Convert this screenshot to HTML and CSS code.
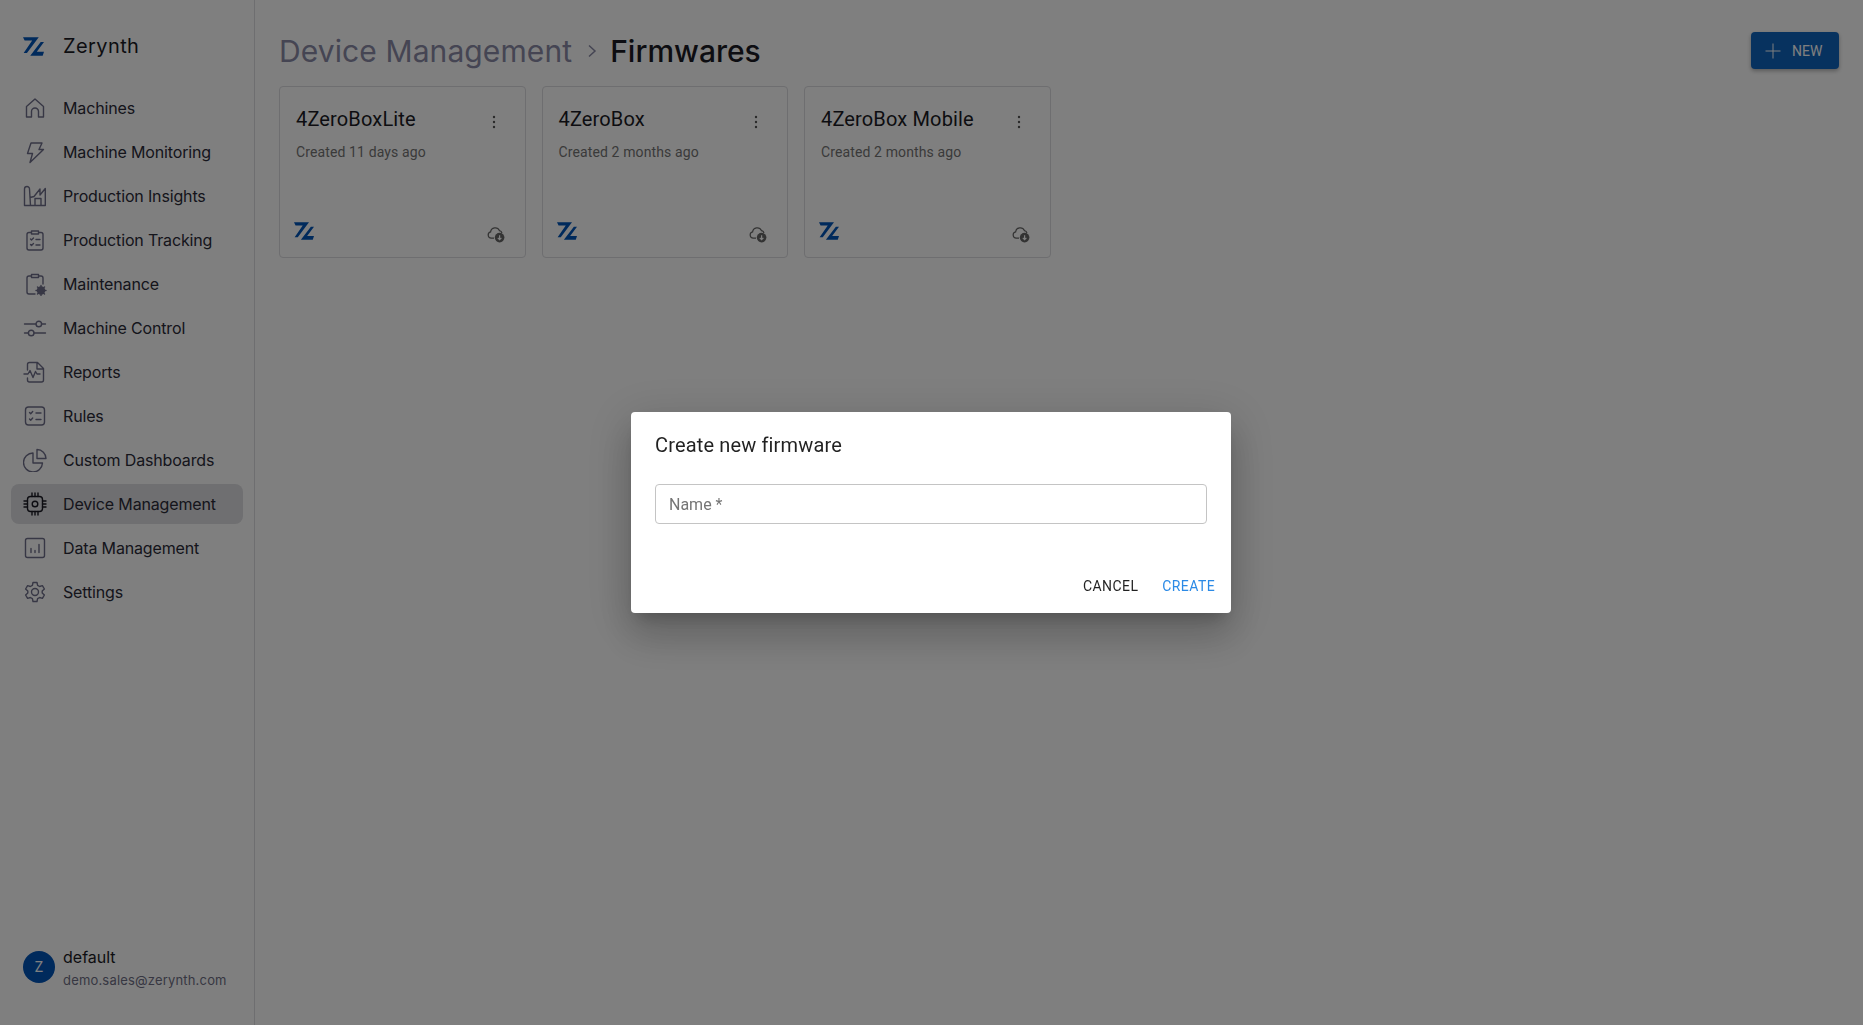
FILE: index.html
```html
<!DOCTYPE html>
<html lang="en">
<head>
  <meta charset="UTF-8" />
  <title>Zerynth - Firmwares</title>
  <link rel="stylesheet" href="styles.css">
</head>
<body>

  <svg class="defs" width="0" height="0">
    <symbol id="logo" viewBox="0 0 64 56">
      <path d="M0 0H48L12 48H2L28 10H5Z" />
      <path d="M54 14H64L42 44H64L60 56H22Z" />
    </symbol>
    <symbol id="cloud" viewBox="0 0 18 18">
      <path class="thin" d="M7 13.200H4.200a3.200 3.200 0 0 1-.6-6.300A4.600 4.600 0 0 1 12.400 5.600 3.200 3.200 0 0 1 15 8" />
      <circle class="dark" cx="12.600" cy="12.600" r="4.800" />
      <path class="white" d="M12.600 10.200v4.400M10.800 12.900l1.800 1.800 1.800-1.800" />
    </symbol>
    <symbol id="dots" viewBox="0 0 4 14">
      <circle cx="2" cy="2" r="1.200" />
      <circle cx="2" cy="7" r="1.200" />
      <circle cx="2" cy="12" r="1.200" />
    </symbol>
  </svg>

  <div class="app">
    <!-- Sidebar -->
    <aside class="sidebar">
      <div class="brand">
        <svg class="brand-logo"><use href="#logo"/></svg>
        <span>Zerynth</span>
      </div>

      <nav class="nav">
        <a class="nav-item">
          <svg class="nav-icon" viewBox="0 0 24 24"><path d="M3.500 21v-10.500L12 3l8.500 7.500V21h-5v-5.500a3.500 3.500 0 0 0-7 0V21z"/></svg>
          <span>Machines</span>
        </a>
        <a class="nav-item">
          <svg class="nav-icon" viewBox="0 0 24 24"><path d="M8 3h11l-3 6.500h4.500L7 22.500 9.500 13.500H4.500z"/></svg>
          <span>Machine Monitoring</span>
        </a>
        <a class="nav-item">
          <svg class="nav-icon" viewBox="0 0 24 24"><path d="M1.500 21.500V5a2.500 2.500 0 0 1 5 0l1 16.500zM7.300 21.500h15v-17L17 11V5l-6 7.500-3.900 1M12 21.500v-7h6v7"/></svg>
          <span>Production Insights</span>
        </a>
        <a class="nav-item">
          <svg class="nav-icon" viewBox="0 0 24 24"><path d="M8.500 4.500H6a2 2 0 0 0-2 2V20a2 2 0 0 0 2 2h12a2 2 0 0 0 2-2V6.500a2 2 0 0 0-2-2h-2.500M8.500 3h7v3h-7zM7.500 11l1 1 2-2M7.500 16.500l1 1 2-2M13 11.500h4M13 17h4"/></svg>
          <span>Production Tracking</span>
        </a>
        <a class="nav-item">
          <svg class="nav-icon" viewBox="0 0 24 24"><path d="M8.500 4H6a2 2 0 0 0-2 2v14a2 2 0 0 0 2 2h6M15.500 4H18a2 2 0 0 1 2 2v6M8.500 2.500h7v3h-7z"/><circle class="fill" cx="18" cy="18.500" r="3.500"/><path class="gear" d="M18 13.500v10M13 18.500h10M14.500 15l7 7M21.500 15l-7 7"/></svg>
          <span>Maintenance</span>
        </a>
        <a class="nav-item">
          <svg class="nav-icon" viewBox="0 0 24 24"><path d="M1.500 8h11.500M18.500 8h4M1.500 17h4M11 17h11.500"/><circle cx="15.800" cy="8" r="2.800"/><circle cx="8.200" cy="17" r="2.800"/></svg>
          <span>Machine Control</span>
        </a>
        <a class="nav-item">
          <svg class="nav-icon" viewBox="0 0 24 24"><path d="M4.500 10V4.500a2 2 0 0 1 2-2h8l6 6V20a2 2 0 0 1-2 2H6.500a2 2 0 0 1-2-2v-2M14 2.500V9h6.500M1 14h4l2-3.500 3 7 2.500-6 1.500 2.500h3"/></svg>
          <span>Reports</span>
        </a>
        <a class="nav-item">
          <svg class="nav-icon" viewBox="0 0 24 24"><rect x="2.500" y="3" width="19" height="18" rx="3"/><path d="M6.500 8.500l1.200 1.200 2-2.200M6.500 15l1.200 1.200 2-2.200M13 9h5M13 15.500h5"/></svg>
          <span>Rules</span>
        </a>
        <a class="nav-item">
          <svg class="nav-icon" viewBox="0 0 24 24"><path d="M10 5a9.500 9.500 0 1 0 9.500 10H10zM14 1.500a9 9 0 0 1 9 9h-9z"/></svg>
          <span>Custom Dashboards</span>
        </a>
        <a class="nav-item active">
          <svg class="nav-icon" viewBox="0 0 24 24"><rect x="4.500" y="4.500" width="15" height="15" rx="3"/><circle cx="12" cy="12" r="2.800"/><path d="M9 1v3.500M12 1v3.500M15 1v3.500M9 19.500V23M12 19.500V23M15 19.500V23M1 9h3.500M1 12h3.500M1 15h3.500M19.500 9H23M19.500 12H23M19.500 15H23"/></svg>
          <span>Device Management</span>
        </a>
        <a class="nav-item">
          <svg class="nav-icon" viewBox="0 0 24 24"><rect x="2.500" y="2.500" width="19" height="19" rx="2"/><path d="M8 16.500v-4M12 16.500v-2M16 16.500v-8"/></svg>
          <span>Data Management</span>
        </a>
        <a class="nav-item">
          <svg class="nav-icon" viewBox="0 0 24 24"><circle cx="12" cy="12" r="3.500"/><path d="M10 2.500h4l.6 2.900 2 1.100 2.800-.9 2 3.400-2.200 2v2l2.200 2-2 3.400-2.800-.9-2 1.100-.6 2.900h-4l-.6-2.900-2-1.100-2.800.9-2-3.400 2.200-2v-2l-2.200-2 2-3.400 2.800.9 2-1.100z"/></svg>
          <span>Settings</span>
        </a>
      </nav>

      <div class="user">
        <div class="avatar">Z</div>
        <div class="user-text">
          <div class="user-name">default</div>
          <div class="user-mail">demo.sales@zerynth.com</div>
        </div>
      </div>
    </aside>

    <!-- Main -->
    <main class="main">
      <header class="page-head">
        <div class="crumbs">
          <span class="crumb-parent">Device Management</span>
          <svg class="crumb-sep" viewBox="0 0 12 16"><path d="M3 2.500 9 8l-6 5.500"/></svg>
          <span class="crumb-current">Firmwares</span>
        </div>
        <button class="new-btn">
          <svg class="new-plus" viewBox="0 0 16 16"><path d="M8 0.500v15M0.500 8h15"/></svg>
          NEW
        </button>
      </header>

      <section class="cards">
        <article class="card">
          <div class="card-top">
            <div>
              <div class="card-title">4ZeroBoxLite</div>
              <div class="card-sub">Created 11 days ago</div>
            </div>
            <svg class="card-dots"><use href="#dots"/></svg>
          </div>
          <div class="card-bottom">
            <svg class="card-logo"><use href="#logo"/></svg>
            <svg class="card-cloud"><use href="#cloud"/></svg>
          </div>
        </article>
        <article class="card">
          <div class="card-top">
            <div>
              <div class="card-title">4ZeroBox</div>
              <div class="card-sub">Created 2 months ago</div>
            </div>
            <svg class="card-dots"><use href="#dots"/></svg>
          </div>
          <div class="card-bottom">
            <svg class="card-logo"><use href="#logo"/></svg>
            <svg class="card-cloud"><use href="#cloud"/></svg>
          </div>
        </article>
        <article class="card">
          <div class="card-top">
            <div>
              <div class="card-title">4ZeroBox Mobile</div>
              <div class="card-sub">Created 2 months ago</div>
            </div>
            <svg class="card-dots"><use href="#dots"/></svg>
          </div>
          <div class="card-bottom">
            <svg class="card-logo"><use href="#logo"/></svg>
            <svg class="card-cloud"><use href="#cloud"/></svg>
          </div>
        </article>
      </section>
    </main>
  </div>

  <!-- Modal -->
  <div class="backdrop">
    <div class="dialog">
      <h2 class="dialog-title">Create new firmware</h2>
      <div class="field">Name *</div>
      <div class="dialog-actions">
        <button class="text-btn">CANCEL</button>
        <button class="text-btn primary">CREATE</button>
      </div>
    </div>
  </div>

</body>
</html>
```

FILE: styles.css
```css
* {
  box-sizing: border-box;
}

body {
  margin: 0;
  background: #fff;
  color: #1b1b24;
  font-family: 'Inter', 'Noto Sans', sans-serif;
  overflow: hidden;
}

.defs {
  display: block;
  height: 0;
}

.app {
  display: flex;
  height: 1025px;
}

.sidebar {
  display: flex;
  flex-direction: column;
  flex: 0 0 255px;
  border-right: 1px solid #dcdce0;
  padding: 0 11px;
}

.brand {
  display: flex;
  align-items: center;
  gap: 19px;
  height: 46px;
  margin-top: 23px;
  padding-left: 12px;
  font-size: 20px;
  letter-spacing: 0.4px;
}

.brand-logo {
  width: 21px;
  height: 19px;
  fill: #0054b8;
}

.nav {
  display: flex;
  flex-direction: column;
  gap: 4px;
  margin-top: 19px;
}

.nav-item {
  display: flex;
  align-items: center;
  gap: 16px;
  height: 40px;
  padding-left: 12px;
  border-radius: 8px;
  font-size: 16px;
  letter-spacing: -0.15px;
  color: #2b2b38;
  white-space: nowrap;
}

.nav-item.active {
  background: #dedee2;
}

.nav-icon {
  flex: none;
  width: 24px;
  height: 24px;
  fill: none;
  stroke: #6f6f8a;
  stroke-width: 1.4;
  stroke-linecap: round;
  stroke-linejoin: round;
}

.nav-item.active .nav-icon {
  stroke: #1b1b24;
}

.nav-icon .fill {
  fill: #6f6f8a;
}

.nav-icon .gear {
  stroke-dasharray: 1.200 7.600;
}

.user {
  display: flex;
  align-items: center;
  gap: 8px;
  margin-top: auto;
  margin-bottom: 34px;
  padding-left: 12px;
}

.avatar {
  display: flex;
  align-items: center;
  justify-content: center;
  width: 32px;
  height: 32px;
  margin-bottom: 4px;
  border-radius: 50%;
  background: #0054b8;
  color: #fff;
  font-family: 'Roboto', sans-serif;
  font-size: 14px;
}

.user-name {
  font-size: 16px;
  line-height: 22px;
}

.user-mail {
  margin-top: 2px;
  font-size: 13px;
  letter-spacing: 0.18px;
  line-height: 21px;
  color: #6f6f85;
}

.main {
  flex: 1;
  padding: 32px 24px 0;
}

.page-head {
  display: flex;
  align-items: center;
  justify-content: space-between;
  height: 37px;
}

.crumbs {
  display: flex;
  align-items: center;
  gap: 12px;
  font-size: 30px;
  margin-top: 1px;
}

.crumb-parent {
  color: #8a8aa6;
  letter-spacing: 0.1px;
}

.crumb-sep {
  width: 12px;
  height: 16px;
  margin-left: 2px;
  fill: none;
  stroke: #8a8aa6;
  stroke-width: 1.5;
}

.crumb-current {
  color: #1b1b24;
  font-weight: 500;
}

.new-btn {
  display: flex;
  align-items: center;
  gap: 11px;
  width: 88px;
  height: 37px;
  padding: 0 0 0 14px;
  border: none;
  border-radius: 4px;
  background: #0f65bf;
  color: #fff;
  font-family: 'Roboto', sans-serif;
  font-size: 14px;
  box-shadow: 0 2px 4px rgba(0, 0, 0, 0.3);
}

.new-plus {
  width: 16px;
  height: 16px;
  fill: none;
  stroke: #fff;
  stroke-width: 1;
}

.cards {
  display: flex;
  gap: 16px;
  margin-top: 17px;
}

.card {
  display: flex;
  flex-direction: column;
  justify-content: space-between;
  width: 246.5px;
  height: 172px;
  padding: 20px 16px 14px 16px;
  border: 1px solid #dcdce0;
  border-radius: 4px;
  font-family: 'Roboto', sans-serif;
}

.card-top {
  display: flex;
  justify-content: space-between;
}

.card-title {
  font-size: 20px;
  letter-spacing: 0.15px;
  line-height: 24px;
  color: #1b1b24;
}

.card-sub {
  margin-top: 11px;
  font-size: 14px;
  letter-spacing: 0.12px;
  line-height: 20px;
  color: #757575;
}

.card-dots {
  width: 4px;
  height: 14px;
  margin: 8px 13px 0 0;
  fill: #555;
}

.card-bottom {
  display: flex;
  justify-content: space-between;
  align-items: flex-end;
}

.card-logo {
  width: 20px;
  height: 18px;
  margin: 0 0 3px -2px;
  fill: #0054b8;
}

.card-cloud {
  width: 18px;
  height: 18px;
  margin-right: 4px;
}

#cloud .thin {
  fill: none;
  stroke: #666;
  stroke-width: 1.2;
}

#cloud .dark {
  fill: #666;
}

#cloud .white {
  fill: none;
  stroke: #fff;
  stroke-width: 1.2;
}

/* Modal */
.backdrop {
  position: fixed;
  inset: 0;
  display: flex;
  align-items: center;
  justify-content: center;
  padding-right: 1px;
  background: rgba(0, 0, 0, 0.5);
}

.dialog {
  width: 600px;
  height: 201px;
  padding: 17px 16px 0 24px;
  border-radius: 4px;
  background: #fff;
  box-shadow: 0 11px 15px -7px rgba(0, 0, 0, 0.2), 0 24px 38px 3px rgba(0, 0, 0, 0.14), 0 9px 46px 8px rgba(0, 0, 0, 0.12);
  font-family: 'Roboto', sans-serif;
}

.dialog-title {
  margin: 0;
  font-size: 20px;
  font-weight: 400;
  letter-spacing: 0.15px;
  line-height: 32px;
  color: rgba(0, 0, 0, 0.87);
}

.field {
  display: flex;
  align-items: center;
  width: 552px;
  height: 40px;
  margin-top: 23px;
  padding-left: 13px;
  border: 1px solid #c4c4c4;
  border-radius: 4px;
  font-size: 16px;
  color: #757575;
}

.dialog-actions {
  display: flex;
  justify-content: flex-end;
  gap: 24px;
  margin-top: 52px;
}

.text-btn {
  padding: 0;
  border: none;
  background: none;
  font-family: 'Roboto', sans-serif;
  font-size: 14px;
  line-height: 20px;
  font-weight: 400;
  letter-spacing: 0.4px;
  color: rgba(0, 0, 0, 0.87);
}

.text-btn.primary {
  color: #2b8ae6;
}
```
